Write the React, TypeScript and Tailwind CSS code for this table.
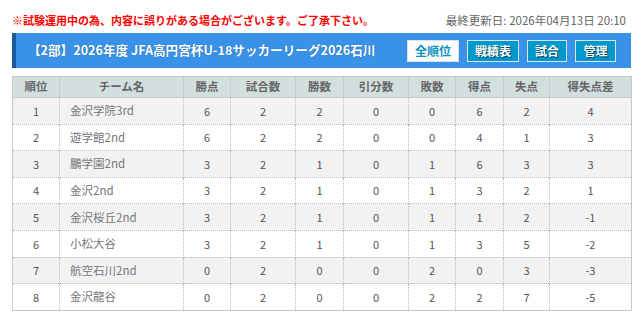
import React from "react";

const rows = [
  ["1", "金沢学院3rd", "6", "2", "2", "0", "0", "6", "2", "4"],
  ["2", "遊学館2nd", "6", "2", "2", "0", "0", "4", "1", "3"],
  ["3", "鵬学園2nd", "3", "2", "1", "0", "1", "6", "3", "3"],
  ["4", "金沢2nd", "3", "2", "1", "0", "1", "3", "2", "1"],
  ["5", "金沢桜丘2nd", "3", "2", "1", "0", "1", "1", "2", "-1"],
  ["6", "小松大谷", "3", "2", "1", "0", "1", "3", "5", "-2"],
  ["7", "航空石川2nd", "0", "2", "0", "0", "2", "0", "3", "-3"],
  ["8", "金沢龍谷", "0", "2", "0", "0", "2", "2", "7", "-5"],
];
const heads = ["順位", "チーム名", "勝点", "試合数", "勝数", "引分数", "敗数", "得点", "失点", "得失点差"];
const widths = [47, 124, 47, 65, 48, 65, 47, 48, 46, 82];

export default function App() {
  return (
    <div
      className="w-[643px] h-[320px] bg-white px-3 pt-[13px] overflow-hidden"
      style={{ fontFamily: '"Noto Sans CJK JP", "Noto Sans", sans-serif' }}
    >
      <div className="flex items-center justify-between h-[15px]">
        <span className="text-[11px] font-bold text-[#ff0000] leading-none">
          ※試験運用中の為、内容に誤りがある場合がございます。ご了承下さい。
        </span>
        <span className="text-[11.5px] text-[#666] leading-none mr-[5px]">最終更新日: 2026年04月13日 20:10</span>
      </div>
      <div className="mt-[5px] h-[35px] bg-[#3892e8] border-l-[4px] border-[#1a5aa0] flex items-center justify-between pl-3 pr-[15px]">
        <span
          className="text-white font-bold text-[12.6px] leading-none"
          style={{ textShadow: "0 0 1px rgba(0,40,90,0.5)" }}
        >
          【2部】2026年度 JFA高円宮杯U-18サッカーリーグ2026石川
        </span>
        <div className="flex gap-2">
          <div className="w-[52px] h-[22px] bg-white border border-[#e0e0e0] flex items-center justify-center text-[12px] font-bold text-[#0b8fc0]">
            全順位
          </div>
          {[
            ["戦績表", "w-[52px]"],
            ["試合", "w-[40px]"],
            ["管理", "w-[41px]"],
          ].map(([t, w]) => (
            <div
              key={t}
              className={`${w} h-[22px] bg-[#0099cc] border border-[#d8e4ee] flex items-center justify-center text-[12px] font-bold text-white`}
              style={{ textShadow: "1px 1px 1px rgba(0,0,0,0.6)" }}
            >
              {t}
            </div>
          ))}
        </div>
      </div>
      <table className="mt-[8px] border-collapse border border-[#c8c8c8] text-[11px] text-[#555] w-[619px] table-fixed">
        <colgroup>
          {widths.map((w, i) => (
            <col key={i} style={{ width: w }} />
          ))}
        </colgroup>
        <thead>
          <tr className="bg-[#d3dfdf] h-[21px]">
            {heads.map((h, i) => (
              <th
                key={i}
                className="font-bold text-[#666] text-[11.5px] border-l border-dotted border-[#bbb] first:border-l-0 text-center p-0"
              >
                {h}
              </th>
            ))}
          </tr>
        </thead>
        <tbody>
          {rows.map((r, ri) => (
            <tr key={ri} className={`h-[26.6px] ${ri % 2 === 0 ? "bg-[#f2f2f2]" : "bg-white"}`}>
              {r.map((c, ci) => (
                <td
                  key={ci}
                  className={`border-t border-l border-dotted border-[#bbb] first:border-l-0 p-0 ${
                    ci === 1 ? "text-left pl-[10px] text-[11.5px] text-[#777]" : "text-center"
                  }`}
                >
                  {c}
                </td>
              ))}
            </tr>
          ))}
        </tbody>
      </table>
    </div>
  );
}
